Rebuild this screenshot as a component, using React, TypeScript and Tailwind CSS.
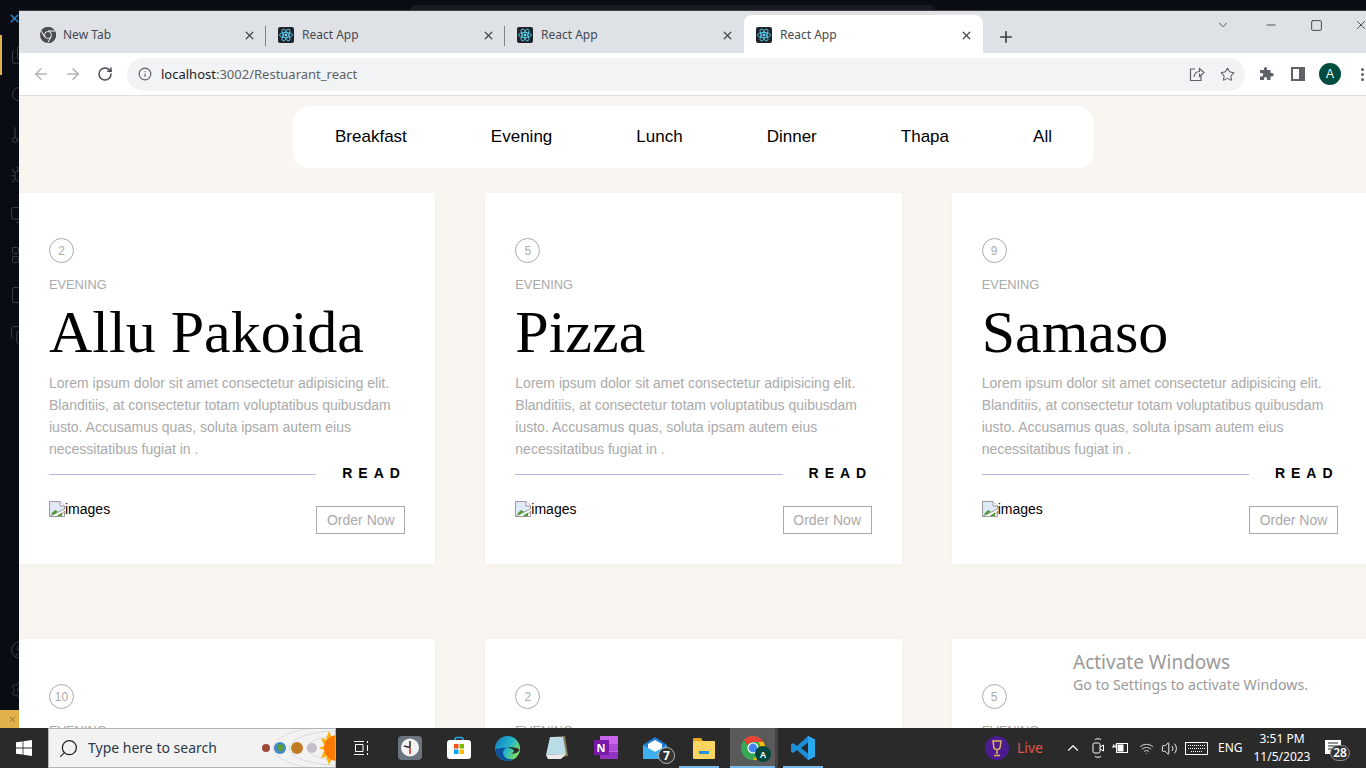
import React from 'react';
import { ArrowLeft, ArrowRight, RotateCw, Info, Star, X, Plus, Minus, Square, ChevronDown, ChevronUp, Files, Search, GitBranch, Bug, LayoutGrid, CircleUser, Settings, Volume2, Wifi, Monitor, Copy } from 'lucide-react';

const menuItems = ['Breakfast', 'Evening', 'Lunch', 'Dinner', 'Thapa', 'All'];

const dishes = [
  { id: 2, name: 'Allu Pakoida' },
  { id: 5, name: 'Pizza' },
  { id: 9, name: 'Samaso' },
  { id: 10, name: 'Maggi' },
  { id: 2, name: 'Nasto' },
  { id: 5, name: 'Momo' },
];

const ReactFavicon = () => (
  <svg width="16" height="16" viewBox="0 0 16 16" className="shrink-0">
    <rect width="16" height="16" rx="2" fill="#20232a" />
    <circle cx="8" cy="8" r="1.4" fill="#61dafb" />
    <g fill="none" stroke="#61dafb" strokeWidth="0.8">
      <ellipse cx="8" cy="8" rx="6.5" ry="2.6" />
      <ellipse cx="8" cy="8" rx="6.5" ry="2.6" transform="rotate(60 8 8)" />
      <ellipse cx="8" cy="8" rx="6.5" ry="2.6" transform="rotate(120 8 8)" />
    </g>
  </svg>
);

const ChromeLogo = ({ size = 16, mono = false }: { size?: number; mono?: boolean }) => (
  <svg width={size} height={size} viewBox="0 0 24 24" className="shrink-0">
    <circle cx="12" cy="12" r="12" fill={mono ? '#4a4e53' : '#34a853'} />
    <path d="M12 0a12 12 0 0 1 10.4 6H12a6 6 0 0 0-5.6 3.8L3 3.7A12 12 0 0 1 12 0z" fill={mono ? '#4a4e53' : '#ea4335'} />
    <path d="M22.4 6A12 12 0 0 1 12 24l5.2-9a6 6 0 0 0 0-9z" fill={mono ? '#4a4e53' : '#fbbc04'} />
    {mono && <path d="M12 6H22.4M7 15L2 6.500M16.500 15L12 23" stroke="#fff" strokeWidth="1.500" />}
    <circle cx="12" cy="12" r="5.6" fill="#fff" />
    <circle cx="12" cy="12" r="4.4" fill={mono ? '#4a4e53' : '#4285f4'} />
  </svg>
);

const Tab = ({ title, active, chrome, divider }: { title: string; active?: boolean; chrome?: boolean; divider?: boolean }) => (
  <div className={`relative flex h-[38px] w-[239px] shrink-0 items-center pt-[2px] ${active ? 'rounded-t-lg bg-white' : ''}`}>
    <div className={`flex w-full items-center ${chrome ? 'pl-[13px]' : 'pl-[12px]'}`}>
      {chrome ? <ChromeLogo mono /> : <ReactFavicon />}
      <span className={`${chrome ? 'ml-[7px]' : 'ml-[8px]'} flex-1 text-xs text-[#45494e]`}>{title}</span>
      <X size={13} strokeWidth={2.4} className="mr-[10px] text-[#45494e]" />
    </div>
    {divider && <div className="absolute right-0 top-[11px] h-[20px] w-px bg-[#7f8388]" />}
  </div>
);

const BrokenImage = () => (
  <svg width="16" height="16" viewBox="0 0 16 16" className="shrink-0">
    <path d="M0.5 0.5H11L15.5 5V8L0.5 15.5Z" fill="#dfe9f8" stroke="#9a9a9a" />
    <path d="M2 13L6 9L9 10.500L4 14Z" fill="#4f9d36" />
    <path d="M0.5 15.500H15.500V10L11 15.500" fill="#fff" stroke="#9a9a9a" />
    <path d="M9 14L13 11.500L13 15H8Z" fill="#4f9d36" />
    <path d="M11 0.500V5H15.500" fill="#fff" stroke="#9a9a9a" />
  </svg>
);

const DishCard = ({ id, name }: { id: number; name: string }) => (
  <div className="h-[371px] bg-white px-[30px] pt-[45px] shadow-[0_1px_4px_rgba(0,0,0,0.04)]">
    <div className="flex h-[25px] w-[25px] items-center justify-center rounded-full border border-[#aaaaaa] text-xs text-[#aaaaaa]">{id}</div>
    <p className="mt-[14px] text-[12.8px] leading-[15px] text-[#aaaaaa]">EVENING</p>
    <h2 className="mt-[4px] font-['Liberation_Serif',serif] text-[60px] leading-[72px] text-black">{name}</h2>
    <p className="mt-[4px] text-sm leading-[22px] text-[#aaaaaa]">
      Lorem ipsum dolor sit amet consectetur adipisicing elit. Blanditiis, at consectetur totam voluptatibus quibusdam iusto. Accusamus quas, soluta ipsam autem eius necessitatibus fugiat in .
    </p>
    <div className="mt-[3px] flex items-center">
      <div className="h-px w-3/4 translate-y-px bg-[#b4b8e2]" />
      <span className="w-1/4 pl-[26px] text-left text-sm font-bold tracking-[6px] text-black">READ</span>
    </div>
    <div className="mt-[18px] flex justify-between">
      <div className="flex h-[16px] items-center text-sm text-black">
        <BrokenImage />
        <span>images</span>
      </div>
      <button className="mt-[5px] h-[28px] w-[89px] border border-[#aaaaaa] text-sm text-[#aaaaaa]">Order Now</button>
    </div>
  </div>
);

const SolarDoodle = () => (
  <svg width="74" height="38" viewBox="0 0 74 38" className="shrink-0">
    <g fill="none" stroke="#dcdcdc">
      <ellipse cx="76" cy="19" rx="30" ry="12" />
      <ellipse cx="76" cy="19" rx="48" ry="17" />
      <ellipse cx="76" cy="19" rx="64" ry="22" />
    </g>
    <circle cx="5" cy="19" r="4" fill="#9c4a36" />
    <circle cx="19" cy="19" r="6" fill="#3f88c9" />
    <path d="M17 15l5 1 1 4-4 3-3-4z" fill="#5e9e3a" />
    <circle cx="36" cy="19" r="6" fill="#c07a22" />
    <circle cx="51" cy="19" r="5" fill="#c3c0cc" />
    <path d="M58 19l7-3v6zM60 9l7 2-4 5zM68 2l3 7-6 1zM60 29l7-2-4-5zM68 36l3-7-6-1z" fill="#ffb000" />
    <circle cx="76" cy="19" r="13" fill="#ff7a00" />
  </svg>
);

const slotClass = 'relative flex h-10 shrink-0 items-center justify-center';

const Taskbar = () => (
  <footer className="flex h-10 shrink-0 items-center bg-[#2a2a2a] font-['Noto_Sans',sans-serif]">
    <div className="flex h-10 w-[48px] shrink-0 items-center justify-center">
      <svg width="16" height="16" viewBox="0 0 16 16" fill="#fff">
        <path d="M0 2.3L6.6 1.4V7.6H0ZM7.4 1.3L16 0V7.6H7.4ZM0 8.4H6.6V14.6L0 13.7ZM7.4 8.4H16V16L7.4 14.7Z" />
      </svg>
    </div>
    <div className="flex h-10 w-[288px] shrink-0 items-center border border-[#b4b4b4] bg-[#f2f2f2] pl-[9px]">
      <Search size={21} strokeWidth={1.4} className="-scale-x-100 text-[#222]" />
      <span className="ml-[9px] flex-1 text-sm text-[#2a3a4a]">Type here to search</span>
      <SolarDoodle />
    </div>

    <div className={`${slotClass} w-[49px]`}>
      <svg width="16" height="16" viewBox="0 0 16 16" fill="none" stroke="#fff">
        <path d="M1 1.5H11M1 14.5H11M2.5 4.5H10V11.5H2.5ZM14.5 1V3M14.5 5V11M14.5 13V15" />
      </svg>
    </div>
    <div className={`${slotClass} w-[49px]`}>
      <svg width="24" height="24" viewBox="0 0 24 24">
        <rect width="24" height="24" rx="4" fill="#6c7480" />
        <circle cx="12" cy="11.5" r="9" fill="#f2f2f2" />
        <path d="M12 11.5V5M12 11.5L6 10" stroke="#333" strokeWidth="1.6" fill="none" />
        <path d="M12 11.5V18" stroke="#d9372c" strokeWidth="1.6" />
      </svg>
    </div>
    <div className={`${slotClass} w-[49px]`}>
      <svg width="24" height="24" viewBox="0 0 24 24">
        <path d="M8 5V3.5A2 2 0 0 1 10 1.5H14A2 2 0 0 1 16 3.5V5" fill="none" stroke="#2aa5e4" strokeWidth="1.6" />
        <rect y="4" width="24" height="19" rx="3" fill="#fff" />
        <rect x="7" y="8" width="4.5" height="4.5" fill="#f25022" />
        <rect x="12.5" y="8" width="4.5" height="4.5" fill="#7fba00" />
        <rect x="7" y="13.5" width="4.5" height="4.5" fill="#00a4ef" />
        <rect x="12.5" y="13.5" width="4.5" height="4.5" fill="#ffb900" />
      </svg>
    </div>
    <div className={`${slotClass} w-[49px]`}>
      <svg width="25" height="25" viewBox="0 0 24 24">
        <defs>
          <linearGradient id="edgeA" x1="0" y1="0" x2="1" y2="0.6">
            <stop offset="0" stopColor="#0d7bc4" />
            <stop offset="0.6" stopColor="#25b6c9" />
            <stop offset="1" stopColor="#7fe05a" />
          </linearGradient>
        </defs>
        <circle cx="12" cy="12" r="12" fill="url(#edgeA)" />
        <path d="M0.2 13C1 19 6 24 12 24c2.5 0 5-.8 6.6-2-4 1-9 0-10.6-4-1-2.6.5-5.5 3-6.5-4-1-9 .5-10.8 1.5z" fill="#0b4f9c" />
        <path d="M11 11.5c3 0 6.5.5 7 2.5 .3 1.3-.7 2.5-2.5 2.8 3 .5 7-.5 8-3.8-2-2-8-3-12.5-1.5z" fill="#2a2a2a" />
      </svg>
    </div>
    <div className={`${slotClass} w-[49px]`}>
      <svg width="24" height="24" viewBox="0 0 24 24">
        <path d="M6 1L20 0L23 20L9 23Z" fill="#8a7a5c" />
        <path d="M5 1L18 1L21 18L1 19Z" fill="#b9dce6" />
        <path d="M1 19L21 18L16 23L3 23Z" fill="#eaeaea" />
      </svg>
    </div>
    <div className={`${slotClass} w-[49px]`}>
      <div className="relative h-[24px] w-[24px]">
        <div className="absolute right-0 top-0 grid h-[23px] w-[18px] grid-rows-3 gap-px bg-[#ca64ea]">
          <div className="bg-[#ca64ea]" />
          <div className="bg-[#ae4bd5]" />
          <div className="bg-[#9332bf]" />
        </div>
        <div className="absolute left-0 top-[4px] flex h-[15px] w-[15px] items-center justify-center bg-[#7719aa] text-[11px] font-bold leading-none text-white">N</div>
      </div>
    </div>
    <div className={`${slotClass} w-[49px]`}>
      <svg width="24" height="22" viewBox="0 0 24 22">
        <path d="M0 8L12 0L24 8V22H0Z" fill="#1f7fd4" />
        <path d="M5 7L12 3L19 7V12L12 15L5 12Z" fill="#fff" />
        <path d="M0 8L12 15L24 8V22H0Z" fill="#3fb0f0" />
      </svg>
      <span className="absolute left-[28px] top-[19px] flex h-[17px] w-[17px] items-center justify-center rounded-full border border-[#b8b8b8] bg-[#333] text-[12px] font-bold leading-none text-white">7</span>
    </div>
    <div className={`${slotClass} w-[49px]`}>
      <svg width="22" height="21" viewBox="0 0 22 21">
        <path d="M0 1A1 1 0 0 1 1 0H8L10 3H0Z" fill="#e6a723" />
        <rect y="3" width="22" height="18" rx="1" fill="#fcd462" />
        <path d="M6 13H16V16H14V21H8V16H6Z" fill="#2a8fd8" />
        <rect x="8" y="16" width="6" height="5" fill="#fcd462" />
      </svg>
      <span className="absolute bottom-0 left-0 h-[2px] w-[40px] bg-[#76b9ed]" />
    </div>
    <div className={`${slotClass} ml-[2px] w-[45px] bg-[#5a5a5a]`}>
      <ChromeLogo size={24} />
      <span className="absolute left-[25px] top-[18px] flex h-[16px] w-[16px] items-center justify-center rounded-full bg-[#00463a] text-[9px] font-semibold leading-none text-white">A</span>
      <span className="absolute bottom-0 left-0 h-[2px] w-full bg-[#76b9ed]" />
    </div>
    <div className="h-10 w-[3px] shrink-0 bg-[#444]" />
    <div className={`${slotClass} ml-[5px] w-[40px]`}>
      <svg width="24" height="24" viewBox="0 0 24 24">
        <path d="M17 0L24 3.5V20.5L17 24L6 14L2 17L0 15.5V8.5L2 7L6 10ZM17 6.5L10 12L17 17.5Z" fill="#1b90d8" />
        <path d="M17 0L24 3.5V20.5L17 24Z" fill="#2aa8f0" />
      </svg>
      <span className="absolute bottom-0 left-0 h-[2px] w-full bg-[#76b9ed]" />
    </div>

    <div className="ml-[162px] flex h-[24px] w-[24px] shrink-0 items-center justify-center rounded-full bg-[#4b1d91]">
      <svg width="12" height="18" viewBox="0 0 12 18" fill="none" stroke="#e2b45c" strokeWidth="1.5">
        <path d="M2 2H10L9 9C8.5 11 3.5 11 3 9ZM6 11V15M3 16.5H9" />
      </svg>
    </div>
    <span className="ml-[8px] w-[26px] shrink-0 text-sm text-[#e5534b]">Live</span>
    <ChevronUp size={18} strokeWidth={1.5} className="ml-[21px] shrink-0 text-white" />
    <svg width="12" height="20" viewBox="0 0 12 20" fill="none" stroke="#fff" className="ml-[10px] shrink-0">
      <path d="M3 1.5C5 .5 7 .5 9 1.5M3 18.5C5 19.5 7 19.5 9 18.5" />
      <rect x="1" y="5" width="7" height="10" rx="1.5" />
      <path d="M8 9L11.5 7V13L8 11" />
    </svg>
    <svg width="17" height="12" viewBox="0 0 17 12" fill="none" stroke="#fff" className="ml-[8px] shrink-0">
      <rect x="4.5" y="1.5" width="11" height="9" />
      <rect x="6" y="3" width="5" height="6" fill="#fff" />
      <path d="M0 5H4M1.5 2.5V5M3 2.5V5" />
    </svg>
    <Wifi size={15} strokeWidth={1.5} className="ml-[10px] shrink-0 text-[#d8d8d8]" />
    <Volume2 size={17} strokeWidth={1.3} className="ml-[7px] shrink-0 text-white" />
    <svg width="23" height="13" viewBox="0 0 23 13" fill="none" stroke="#fff" className="ml-[7px] shrink-0">
      <rect x=".5" y=".5" width="22" height="12" />
      <path d="M3 3.5H20M3 6.5H20M6 9.5H17" strokeDasharray="1 1" />
    </svg>
    <span className="ml-[10px] w-[24px] shrink-0 text-xs text-white">ENG</span>
    <div className="ml-[10px] w-[60px] shrink-0 text-center text-xs leading-[18px] text-white">
      <div>3:51 PM</div>
      <div>11/5/2023</div>
    </div>
    <div className="relative ml-[13px] h-10 w-[30px] shrink-0">
      <svg width="16" height="14" viewBox="0 0 16 14" className="absolute left-0 top-[12px]">
        <path d="M0 0H16V14H0Z" fill="#fff" />
        <path d="M3 3H13M3 6H13M3 9H13" stroke="#2a2a2a" />
      </svg>
      <span className="absolute left-[5px] top-[17px] flex h-[16px] w-[20px] items-center justify-center rounded-full border border-[#8a8a8a] bg-[#333] text-[12px] font-semibold leading-none text-white">28</span>
    </div>
  </footer>
);

const ToolbarIcons = () => (
  <div className="ml-[6px] flex items-center">
    <svg width="16" height="16" viewBox="0 0 16 16" fill="#5f6368" className="ml-[7px]">
      <path d="M6 2.5A1.5 1.5 0 0 1 9 2.5V4H12.5V7H14A1.75 1.75 0 0 1 14 10.5H12.5V14H9V12.5A1.5 1.5 0 0 0 6 12.5V14H2V10.5H3.5A1.75 1.75 0 0 0 3.5 7H2V4H6Z" />
    </svg>
    <div className="ml-[17px] flex h-[14px] w-[14px] justify-start border-2 border-[#5f6368]">
      <div className="ml-auto h-full w-[4px] bg-[#5f6368]" />
    </div>
    <div className="ml-[14px] flex h-[22px] w-[22px] items-center justify-center rounded-full bg-[#004d40] text-xs text-white">A</div>
    <div className="ml-[20px] flex flex-col gap-[2px]">
      <span className="h-[3px] w-[3px] rounded-full bg-[#5f6368]" />
      <span className="h-[3px] w-[3px] rounded-full bg-[#5f6368]" />
      <span className="h-[3px] w-[3px] rounded-full bg-[#5f6368]" />
    </div>
  </div>
);

const ActivityBar = () => (
  <aside className="relative flex w-[19px] shrink-0 flex-col overflow-hidden bg-[#090c13]">
    <X size={13} strokeWidth={3} className="ml-[8px] mt-[2px] shrink-0 text-[#2b7fc4]" />
    <div className="absolute left-0 top-[25px] h-[40px] w-[2px] bg-[#e0b04a]" />
    <div className="mt-[20px] flex flex-1 flex-col gap-[20px] pl-[10px] text-[#3a3f47]">
      <Files size={20} strokeWidth={1.2} className="shrink-0" />
      <Search size={20} strokeWidth={1.2} className="shrink-0" />
      <GitBranch size={20} strokeWidth={1.2} className="shrink-0" />
      <Bug size={20} strokeWidth={1.2} className="shrink-0" />
      <Monitor size={20} strokeWidth={1.2} className="shrink-0" />
      <LayoutGrid size={20} strokeWidth={1.2} className="shrink-0" />
      <Square size={20} strokeWidth={1.2} className="shrink-0" />
      <Copy size={20} strokeWidth={1.2} className="shrink-0" />
    </div>
    <div className="flex flex-col gap-[20px] pb-[10px] pl-[10px] text-[#3a3f47]">
      <CircleUser size={20} strokeWidth={1.2} />
      <Settings size={20} strokeWidth={1.2} />
    </div>
    <div className="flex h-[18px] shrink-0 items-center justify-end bg-[#e0b04a] pr-[2px] text-[#7a5c1e]">
      <X size={9} />
    </div>
  </aside>
);

export default function App() {
  return (
    <div className="flex h-screen w-full flex-col overflow-hidden bg-[#090c13] font-['Liberation_Sans',Arial,sans-serif]">
      <div className="h-[10px] shrink-0 pl-[410px] pt-[5px]">
        <div className="h-[5px] w-[525px] rounded-t-md bg-[#181b22]" />
      </div>
      <div className="flex min-h-0 flex-1">
        <ActivityBar />
        <div className="relative flex min-w-0 flex-1 flex-col overflow-hidden">
          {/* tab strip */}
          <div className="flex h-[43px] shrink-0 items-end border-t border-[#3c3f44] bg-[#dee1e6] pl-[8px] font-['Noto_Sans',sans-serif]">
            <Tab title="New Tab" chrome divider />
            <Tab title="React App" divider />
            <Tab title="React App" />
            <Tab title="React App" active />
            <Plus size={18} strokeWidth={2.2} className="mb-[7px] ml-[14px] shrink-0 text-[#3c4043]" />
            <div className="flex flex-1 items-center self-start pt-[7px] text-[#3c4043]">
              <ChevronDown size={14} strokeWidth={1.5} className="ml-[201px] shrink-0" />
              <Minus size={14} strokeWidth={1.5} className="ml-[34px] shrink-0" />
              <Square size={13} strokeWidth={1.7} className="ml-[32px] shrink-0" />
              <X size={14} strokeWidth={1.5} className="ml-[31px] shrink-0" />
            </div>
          </div>
          {/* address bar */}
          <div className="flex h-[43px] shrink-0 items-center border-b border-[#e3dfd8] bg-white pl-[13px]">
            <ArrowLeft size={18} className="shrink-0 text-[#b0b3b8]" />
            <ArrowRight size={18} className="ml-[14px] shrink-0 text-[#b0b3b8]" />
            <RotateCw size={16} strokeWidth={2.2} className="ml-[15px] shrink-0 text-[#45494e]" />
            <div className="ml-[14px] flex h-[33px] w-[1118px] shrink-0 items-center rounded-full bg-[#f1f3f4] pl-[11px] font-['Noto_Sans',sans-serif] text-[13px]">
              <Info size={14} className="shrink-0 text-[#5f6368]" />
              <span className="ml-[9px] translate-y-px text-[#202124]">localhost</span>
              <span className="flex-1 translate-y-px text-[#5f6368]">:3002/Restuarant_react</span>
              <svg width="16" height="16" viewBox="0 0 16 16" fill="none" stroke="#5f6368" strokeWidth="1.2">
                <path d="M6 3H1.5V14.5H12V10M5 11C5.5 7.5 8 5.5 10.5 5.5V2.5L15 6.5L10.5 10.5V7.5" />
              </svg>
              <Star size={15} strokeWidth={1.7} className="ml-[15px] mr-[10px] shrink-0 text-[#5f6368]" />
            </div>
            <ToolbarIcons />
          </div>
          {/* page */}
          <main className="min-h-0 flex-1 overflow-hidden bg-[#f9f6f1]">
            <div className="w-[1349px]">
              <nav className="mx-auto mt-[10px] flex h-[62px] w-[801px] items-center justify-around rounded-2xl bg-white text-[17px] text-black">
                {menuItems.map((item) => (
                  <span key={item}>{item}</span>
                ))}
              </nav>
              <div className="mt-[25px] grid grid-cols-3 gap-x-[50px] gap-y-[75px]">
                {dishes.map((dish, index) => (
                  <DishCard key={index} id={dish.id} name={dish.name} />
                ))}
              </div>
            </div>
          </main>
          <div className="absolute left-[1054px] top-[639px] font-['Noto_Sans',sans-serif] text-[#9a9a9a]">
            <p className="text-[19px] leading-[26px]">Activate Windows</p>
            <p className="text-[14.2px] leading-[20px]">Go to Settings to activate Windows.</p>
          </div>
        </div>
      </div>
      <Taskbar />
    </div>
  );
}
